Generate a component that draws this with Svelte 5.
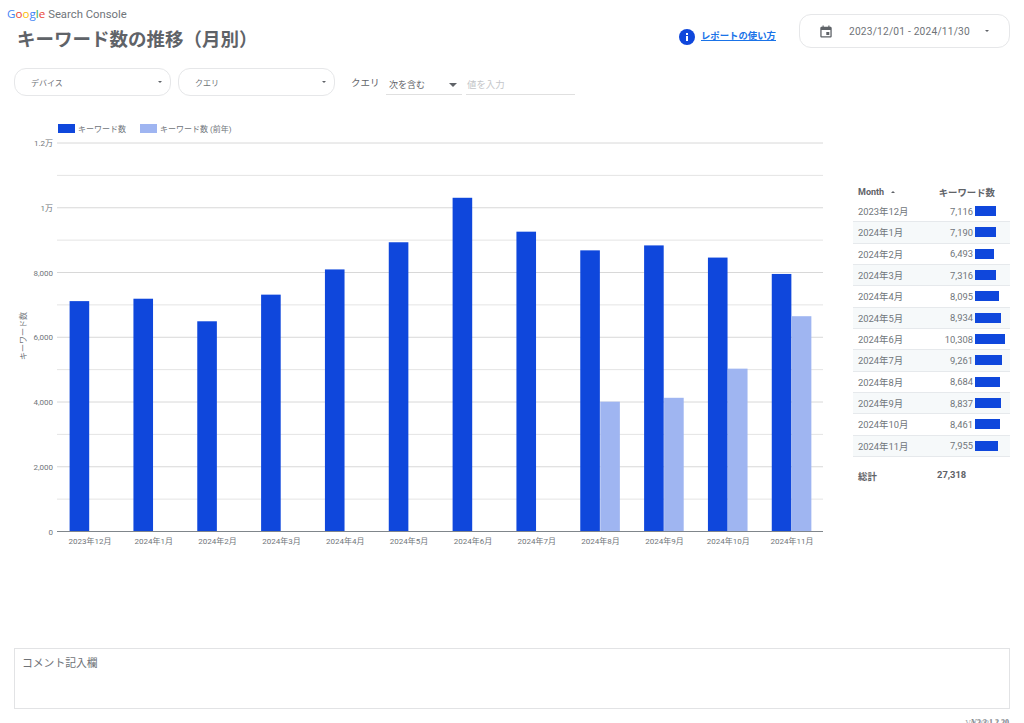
<script lang="ts">
    const rows = [
        { label: "2023年12月", short: "2023年12月", value: 7116, prev: 0 },
        { label: "2024年1月", short: "2024年1月", value: 7190, prev: 0 },
        { label: "2024年2月", short: "2024年2月", value: 6493, prev: 0 },
        { label: "2024年3月", short: "2024年3月", value: 7316, prev: 0 },
        { label: "2024年4月", short: "2024年4月", value: 8095, prev: 0 },
        { label: "2024年5月", short: "2024年5月", value: 8934, prev: 0 },
        { label: "2024年6月", short: "2024年6月", value: 10308, prev: 0 },
        { label: "2024年7月", short: "2024年7月", value: 9261, prev: 0 },
        { label: "2024年8月", short: "2024年8月", value: 8684, prev: 4010 },
        { label: "2024年9月", short: "2024年9月", value: 8837, prev: 4130 },
        { label: "2024年10月", short: "2024年10月", value: 8461, prev: 5030 },
        { label: "2024年11月", short: "2024年11月", value: 7955, prev: 6650 }
    ];

    const left = 57;
    const right = 823;
    const base = 531.5;
    const perUnit = 388.5 / 12000;
    const step = (right - left) / 12;

    const ticks = [
        { v: 0, label: "0" },
        { v: 1000 },
        { v: 2000, label: "2,000" },
        { v: 3000 },
        { v: 4000, label: "4,000" },
        { v: 5000 },
        { v: 6000, label: "6,000" },
        { v: 7000 },
        { v: 8000, label: "8,000" },
        { v: 9000 },
        { v: 10000, label: "1万" },
        { v: 11000 },
        { v: 12000, label: "1.2万" }
    ];

    const y = (v: number) => base - v * perUnit;
    const fmt = (v: number) => v.toLocaleString("en-US");
</script>

<div class="page">
    <header class="top">
        <div class="brand">
            <div class="logo">
                <span class="g-blue">G</span><span class="g-red">o</span><span class="g-yellow">o</span><span class="g-blue">g</span><span class="g-green">l</span><span class="g-red">e</span>
                <span class="product">Search Console</span>
            </div>
            <h1>キーワード数の推移（月別）</h1>
        </div>
        <div class="actions">
            <div class="help">
                <svg width="16" height="16" viewBox="0 0 16 16">
                    <circle cx="8" cy="8" r="8" fill="#0f47dc" />
                    <rect x="7" y="7" width="2" height="5" fill="#fff" />
                    <rect x="7" y="4" width="2" height="2" fill="#fff" />
                </svg>
                <span class="help-link">レポートの使い方</span>
            </div>
            <div class="date">
                <svg width="12" height="13" viewBox="0 0 12 13">
                    <path d="M2.5 0.5h1.2v1.2h4.6V0.5h1.2v1.2h0.9c.7 0 1.3.6 1.3 1.3v8.2c0 .7-.6 1.3-1.3 1.3H1.6c-.7 0-1.3-.6-1.3-1.3V3c0-.7.6-1.3 1.3-1.3h.9zM1.6 5v6.2h8.8V5zM6.3 7h3v3h-3z" fill="#5f6368" fill-rule="evenodd" />
                </svg>
                <span class="date-text">2023/12/01 - 2024/11/30</span>
                <span class="caret small"></span>
            </div>
        </div>
    </header>

    <div class="filters">
        <div class="pill"><span>デバイス</span><span class="caret small"></span></div>
        <div class="pill"><span>クエリ</span><span class="caret small"></span></div>
        <span class="query-label">クエリ</span>
        <div class="select"><span>次を含む</span><span class="caret"></span></div>
        <div class="input">値を入力</div>
    </div>

    <main class="main">
        <svg class="chart" width="845" height="524" viewBox="0 110 845 524">
            <rect x="58" y="124" width="17" height="9" fill="#0f47dc" />
            <text class="legend" x="78" y="131.5">キーワード数</text>
            <rect x="140" y="124" width="17" height="9" fill="#9fb5f1" />
            <text class="legend" x="160" y="131.5">キーワード数 (前年)</text>

            {#each ticks as t}
                {#if t.v > 0}
                    <line x1={left} x2={right} y1={y(t.v)} y2={y(t.v)} stroke={t.label ? "#d8d8d8" : "#e4e4e4"} />
                {/if}
                {#if t.label}
                    <text class="tick" x="53" y={y(t.v) + 3} text-anchor="end">{t.label}</text>
                {/if}
            {/each}

            {#each rows as r, i}
                {@const x = left + step * i + 12.6}
                <rect x={x} y={y(r.value)} width="19.6" height={base - y(r.value)} fill="#0f47dc" />
                {#if r.prev}
                    <rect x={x + 20} y={y(r.prev)} width="19.6" height={base - y(r.prev)} fill="#9fb5f1" />
                {/if}
                <text class="tick" x={left + step * i + step / 2 + 1} y="544" text-anchor="middle">{r.short}</text>
            {/each}

            <line x1={left} x2={right} y1={base} y2={base} stroke="#80868b" stroke-width="1.2" />
            <text class="tick" text-anchor="middle" transform="translate(26 336) rotate(-90)">キーワード数</text>
        </svg>

        <section class="table">
            <div class="thead">
                <span class="th-month">Month <span class="sort"></span></span>
                <span class="th-kw">キーワード数</span>
            </div>
            {#each rows as r, i}
                <div class="row" class:alt={i % 2 === 1}>
                    <span class="month">{r.label}</span>
                    <span class="num">{fmt(r.value)}</span>
                    <span class="bar-cell"><span class="bar" style="width: {(r.value / 10308) * 30}px"></span></span>
                </div>
            {/each}
            <div class="total">
                <span>総計</span>
                <span class="total-num">27,318</span>
            </div>
        </section>
    </main>

    <div class="comment">コメント記入欄</div>

    <footer class="version">
        <span>V3.3.1.2.20</span>
        <span class="ghost">V0.2021.1.20</span>
    </footer>
</div>

<style>
    :global(body) {
        margin: 0;
        background: #fff;
    }

    .page {
        width: 1024px;
        height: 723px;
        overflow: hidden;
        font-family: Roboto, "Noto Sans CJK JP", sans-serif;
        color: #5f6368;
    }

    .top {
        display: flex;
        justify-content: space-between;
        height: 68px;
        box-sizing: border-box;
    }

    .brand {
        padding-left: 7px;
    }

    .logo {
        font-family: "Open Sans", sans-serif;
        font-size: 11.6px;
        line-height: 14px;
        padding-top: 7px;
        white-space: nowrap;
    }

    .g-blue { color: #4285f4; }
    .g-red { color: #ea4335; }
    .g-yellow { color: #fbbc05; }
    .g-green { color: #34a853; }

    .product {
        font-family: Roboto, sans-serif;
        font-size: 11.3px;
        color: #70757a;
    }

    h1 {
        margin: 3px 0 0 10px;
        font-family: "Noto Sans CJK JP", sans-serif;
        font-size: 18.5px;
        line-height: 26px;
        font-weight: 700;
        color: #5f6368;
        white-space: nowrap;
    }

    .actions {
        display: flex;
        align-items: flex-start;
        padding: 14px 14px 0 0;
    }

    .help {
        display: flex;
        align-items: center;
        gap: 6px;
        margin: 15px 23px 0 0;
    }

    .help-link {
        font-family: "Noto Sans CJK JP", sans-serif;
        font-size: 9.4px;
        font-weight: 700;
        color: #1a73e8;
        text-decoration: underline;
        position: relative;
        top: -2px;
    }

    .date {
        width: 211px;
        height: 34px;
        box-sizing: border-box;
        border: 1.5px solid #e6e7e9;
        border-radius: 12px;
        display: flex;
        align-items: center;
        padding-left: 20px;
    }

    .date-text {
        margin-left: 17px;
        margin-right: 15px;
        font-size: 10.2px;
        letter-spacing: 0.2px;
        color: #6f7378;
        white-space: nowrap;
    }

    .caret {
        display: inline-block;
        width: 0;
        height: 0;
        border-left: 4px solid transparent;
        border-right: 4px solid transparent;
        border-top: 4px solid #5f6368;
    }

    .caret.small {
        border-left-width: 2px;
        border-right-width: 2px;
        border-top-width: 2px;
    }

    .filters {
        display: flex;
        align-items: center;
        height: 28px;
        padding-left: 14px;
    }

    .pill {
        width: 157px;
        height: 28px;
        box-sizing: border-box;
        border: 1.5px solid #e6e7e9;
        border-radius: 12px;
        display: flex;
        align-items: center;
        justify-content: space-between;
        padding: 0 8px 0 16px;
        margin-right: 7px;
        font-family: "Noto Sans CJK JP", sans-serif;
        font-size: 8px;
        color: #6f7378;
    }

    .query-label {
        margin-left: 9px;
        font-family: "Noto Sans CJK JP", sans-serif;
        font-size: 9.5px;
        width: 35px;
    }

    .select {
        width: 76px;
        height: 20px;
        box-sizing: border-box;
        border-bottom: 1px solid #e0e0e0;
        display: flex;
        align-items: center;
        justify-content: space-between;
        padding: 0 5px 0 3px;
        font-family: "Noto Sans CJK JP", sans-serif;
        font-size: 9px;
        margin-top: 6px;
    }

    .input {
        width: 109px;
        height: 20px;
        box-sizing: border-box;
        border-bottom: 1px solid #e0e0e0;
        margin: 6px 0 0 4px;
        padding-left: 1px;
        font-family: "Noto Sans CJK JP", sans-serif;
        font-size: 9.4px;
        line-height: 19px;
        color: #c4c6c9;
    }

    .main {
        display: flex;
        height: 538px;
        margin-top: 14px;
    }

    .chart {
        display: block;
        flex: none;
    }

    .chart text {
        font-family: Roboto, "Noto Sans CJK JP", sans-serif;
    }

    .legend {
        font-size: 8px;
        fill: #70757a;
    }

    .tick {
        font-size: 8px;
        fill: #70757a;
    }

    .table {
        width: 157px;
        margin: 72px 0 0 8px;
        font-size: 9.4px;
    }

    .thead {
        display: flex;
        justify-content: space-between;
        height: 19px;
        align-items: center;
        padding: 0 15px 0 5px;
        font-weight: 700;
        font-size: 9px;
        color: #5f6368;
    }

    .th-kw {
        font-family: "Noto Sans CJK JP", sans-serif;
        font-size: 9.4px;
    }

    .sort {
        display: inline-block;
        width: 0;
        height: 0;
        margin: 0 0 2px 5px;
        border-left: 2px solid transparent;
        border-right: 2px solid transparent;
        border-bottom: 2px solid #5f6368;
    }

    .row {
        display: flex;
        align-items: center;
        height: 21.33px;
        box-sizing: border-box;
        padding-left: 5px;
        border-bottom: 1px solid #e6e9ec;
        color: #70757a;
    }

    .row.alt {
        background: #f6f9fa;
    }

    .month {
        width: 66px;
        white-space: nowrap;
    }

    .num {
        width: 49px;
        text-align: right;
    }

    .bar-cell {
        margin-left: 2px;
        display: flex;
    }

    .bar {
        display: block;
        height: 10px;
        background: #0f47dc;
    }

    .total {
        display: flex;
        margin-top: 12px;
        padding-left: 5px;
        font-weight: 700;
        color: #5f6368;
    }

    .total > span:first-child {
        width: 79px;
    }

    .comment {
        margin: 0 14px;
        height: 61px;
        box-sizing: border-box;
        border: 1px solid #e2e3e5;
        padding: 5px 7px;
        font-family: "Noto Sans CJK JP", sans-serif;
        font-size: 10.8px;
        line-height: 16px;
        color: #6f7378;
    }

    .version {
        position: relative;
        margin: 9px 15px 0 0;
        text-align: right;
        font-family: "Liberation Serif", serif;
        font-size: 8px;
        line-height: 10px;
        font-weight: 700;
        color: #80868b;
    }

    .ghost {
        position: absolute;
        right: 0;
        top: 1px;
        font-weight: 400;
        color: #9aa0a6;
    }
</style>
